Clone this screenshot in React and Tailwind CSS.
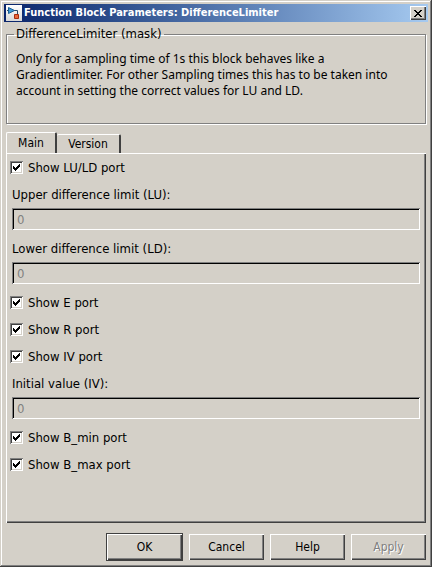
import { useState } from 'react';

const raised =
  'shadow-[inset_1px_1px_0_#ffffff,inset_-1px_-1px_0_#404040,inset_-2px_-2px_0_#808080]';

function CheckRow({ label }) {
  const [checked, setChecked] = useState(true);
  return (
    <label className="flex h-[27px] items-center gap-[5px] pl-[3px]">
      <span className="grid size-[13px] shrink-0">
        <input
          type="checkbox"
          checked={checked}
          onChange={(e) => setChecked(e.target.checked)}
          className="peer col-start-1 row-start-1 size-[13px] appearance-none bg-white shadow-[inset_1px_1px_0_#808080,inset_-1px_-1px_0_#ffffff,inset_2px_2px_0_#404040,inset_-2px_-2px_0_#d4d0c8]"
        />
        <svg
          viewBox="0 0 13 13"
          shapeRendering="crispEdges"
          className="pointer-events-none invisible col-start-1 row-start-1 size-[13px] peer-checked:visible"
        >
          <path
            d="M3 5h1v3h-1zM4 6h1v3h-1zM5 7h1v3h-1zM6 6h1v3h-1zM7 5h1v3h-1zM8 4h1v3h-1zM9 3h1v3h-1z"
            fill="#000"
          />
        </svg>
      </span>
      <span>{label}</span>
    </label>
  );
}

function Field({ id, label }) {
  return (
    <div className="px-[5px]">
      <label htmlFor={id} className="flex h-[27px] items-center">
        {label}
      </label>
      <div className="h-[27px]">
        <input
          id={id}
          type="text"
          disabled
          defaultValue="0"
          className="block h-[22px] w-full bg-[#d4d0c8] px-[5px] text-[#808080] shadow-[inset_1px_1px_0_#808080,inset_-1px_-1px_0_#ffffff,inset_2px_2px_0_#000000]"
        />
      </div>
    </div>
  );
}

export default function App() {
  return (
    <div className="flex min-h-screen flex-col bg-[#d4d0c8] p-1 font-['Tahoma','DejaVu_Sans_Condensed','DejaVu_Sans',sans-serif] text-[13px] leading-[16px] text-black shadow-[inset_-1px_-1px_0_#404040,inset_1px_1px_0_#d4d0c8,inset_-2px_-2px_0_#808080,inset_2px_2px_0_#ffffff]">
      <header className="flex h-[18px] items-center bg-linear-to-r from-[#0a246a] to-[#a6caf0] px-[2px]">
        <svg viewBox="0 0 16 16" className="size-4 shrink-0">
          <defs>
            <linearGradient id="tile" x1="0" y1="0" x2="0" y2="1">
              <stop offset="0" stopColor="#ffffff" />
              <stop offset="1" stopColor="#d8d8d8" />
            </linearGradient>
          </defs>
          <rect width="16" height="16" fill="url(#tile)" />
          <path d="M1 5.500h2M8 5.500h3.500v4" stroke="#2a4a66" fill="none" />
          <path d="M2.500 2.500v6l6-3z" fill="#3f9bd8" stroke="#1c5f94" />
          <path d="M8.500 9.500h4v4h-4z" fill="#e8683c" stroke="#a82c0c" />
        </svg>
        <h1 className="ml-[2px] flex-1 whitespace-nowrap text-[11px] font-bold text-white">
          Function Block Parameters: DifferenceLimiter
        </h1>
        <button
          type="button"
          aria-label="Close"
          className={`grid h-[14px] w-4 place-items-center bg-[#d4d0c8] ${raised}`}
        >
          <svg viewBox="0 0 8 7" shapeRendering="crispEdges" className="h-[7px] w-2">
            <path
              d="M0 0h2v1h-2zM6 0h2v1h-2zM1 1h2v1h-2zM5 1h2v1h-2zM2 2h4v1h-4zM3 3h2v1h-2zM2 4h4v1h-4zM1 5h2v1h-2zM5 5h2v1h-2zM0 6h2v1h-2zM6 6h2v1h-2z"
              fill="#000"
            />
          </svg>
        </button>
      </header>

      <main className="flex flex-1 flex-col px-[2px] pt-1">
        <fieldset className="h-[98px] border border-[#808080] px-[7px] shadow-[1px_1px_0_#ffffff,inset_1px_1px_0_#ffffff]">
          <legend className="px-[2px]">DifferenceLimiter (mask)</legend>
          <p className="pt-[9px] pr-6 pl-[2px] font-['Noto_Sans',sans-serif] text-[12px]">
            Only for a sampling time of 1s this block behaves like a Gradientlimiter. For other
            Sampling times this has to be taken into account in setting the correct values for LU
            and LD.
          </p>
        </fieldset>

        <div role="tablist" className="mt-2 flex h-[21px] items-end text-[12px]">
          <button
            type="button"
            role="tab"
            aria-selected="true"
            className="h-[21px] w-[51px] rounded-t-[2px] border-t border-r-2 border-l border-t-white border-r-[#404040] border-l-white"
          >
            Main
          </button>
          <button
            type="button"
            role="tab"
            aria-selected="false"
            className="h-[19px] w-[64px] rounded-t-[2px] border-t border-r-2 border-t-white border-r-[#404040]"
          >
            Version
          </button>
        </div>
        <section role="tabpanel" className={`flex-1 px-px pt-px ${raised}`}>
          <CheckRow label="Show LU/LD port" />
          <Field id="lu" label="Upper difference limit (LU):" />
          <Field id="ld" label="Lower difference limit (LD):" />
          <CheckRow label="Show E port" />
          <CheckRow label="Show R port" />
          <CheckRow label="Show IV port" />
          <Field id="iv" label="Initial value (IV):" />
          <CheckRow label="Show B_min port" />
          <CheckRow label="Show B_max port" />
        </section>

        <footer className="flex items-center justify-end gap-[6px] pt-[10px] pb-[2px] text-[12px]">
          <button
            type="button"
            className="h-7 w-[77px] border border-[#404040] shadow-[inset_1px_1px_0_#ffffff,inset_-1px_-1px_0_#404040,inset_-2px_-2px_0_#808080]"
          >
            OK
          </button>
          <button type="button" className={`h-[26px] w-[75px] ${raised}`}>
            Cancel
          </button>
          <button type="button" className={`h-[26px] w-[75px] ${raised}`}>
            Help
          </button>
          <button
            type="button"
            disabled
            className={`h-[26px] w-[75px] text-[#808080] [text-shadow:1px_1px_0_#ffffff] ${raised}`}
          >
            Apply
          </button>
        </footer>
      </main>
    </div>
  );
}
